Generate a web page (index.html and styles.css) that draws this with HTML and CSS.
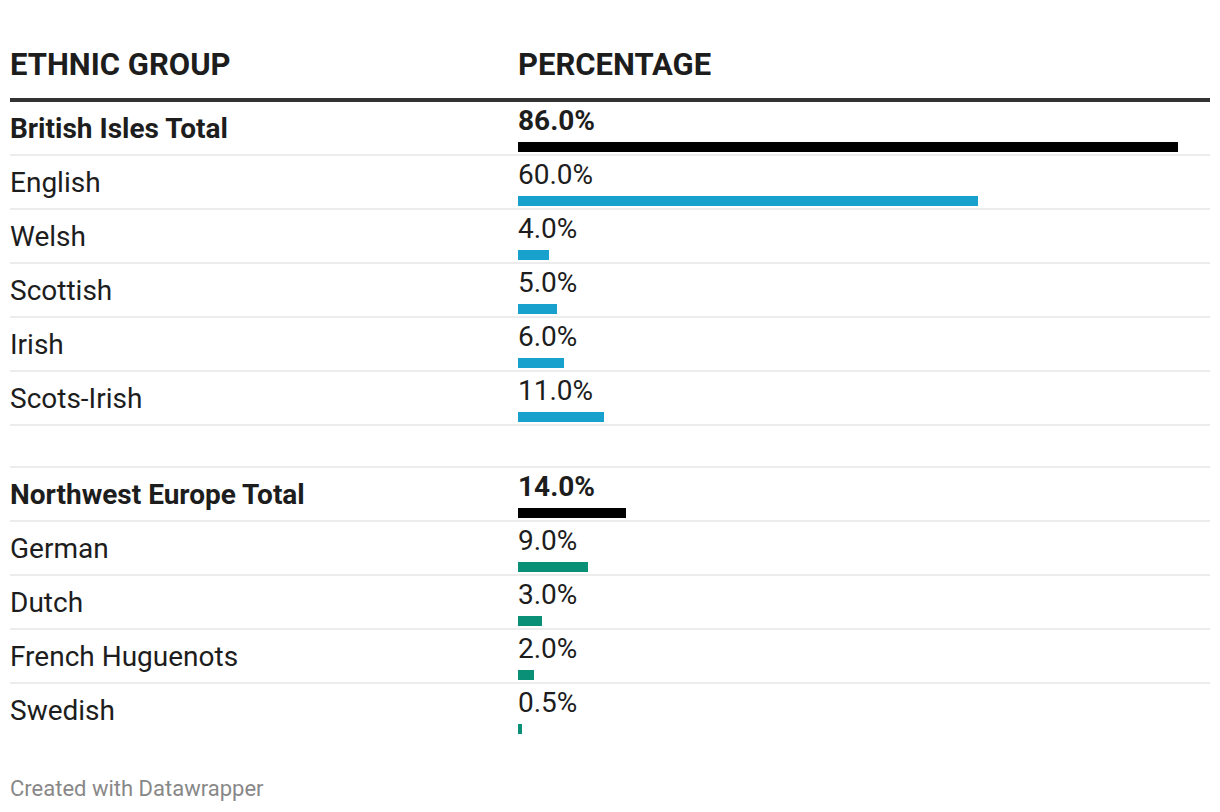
FILE: index.html
```html
<!DOCTYPE html>
<html lang="en">
<head>
<meta charset="utf-8">
<title>Ethnic groups</title>
<link rel="stylesheet" href="styles.css">
</head>
<body>
<div class="chart">
  <div class="table">
    <div class="row head">
      <div class="cell">ETHNIC GROUP</div>
      <div class="cell">PERCENTAGE</div>
    </div>

    <div class="row total">
      <div class="label">British Isles Total</div>
      <div class="val"><span class="num">86.0%</span><span class="bar black" style="width:660px"></span></div>
    </div>
    <div class="row">
      <div class="label">English</div>
      <div class="val"><span class="num">60.0%</span><span class="bar blue" style="width:460px"></span></div>
    </div>
    <div class="row">
      <div class="label">Welsh</div>
      <div class="val"><span class="num">4.0%</span><span class="bar blue" style="width:31px"></span></div>
    </div>
    <div class="row">
      <div class="label">Scottish</div>
      <div class="val"><span class="num">5.0%</span><span class="bar blue" style="width:39px"></span></div>
    </div>
    <div class="row">
      <div class="label">Irish</div>
      <div class="val"><span class="num">6.0%</span><span class="bar blue" style="width:46px"></span></div>
    </div>
    <div class="row">
      <div class="label">Scots-Irish</div>
      <div class="val"><span class="num">11.0%</span><span class="bar blue" style="width:86px"></span></div>
    </div>
    <div class="row blank"></div>

    <div class="row total">
      <div class="label">Northwest Europe Total</div>
      <div class="val"><span class="num">14.0%</span><span class="bar black" style="width:108px"></span></div>
    </div>
    <div class="row">
      <div class="label">German</div>
      <div class="val"><span class="num">9.0%</span><span class="bar green" style="width:70px"></span></div>
    </div>
    <div class="row">
      <div class="label">Dutch</div>
      <div class="val"><span class="num">3.0%</span><span class="bar green" style="width:24px"></span></div>
    </div>
    <div class="row">
      <div class="label">French Huguenots</div>
      <div class="val"><span class="num">2.0%</span><span class="bar green" style="width:16px"></span></div>
    </div>
    <div class="row last">
      <div class="label">Swedish</div>
      <div class="val"><span class="num">0.5%</span><span class="bar green" style="width:4px"></span></div>
    </div>
  </div>
  <div class="footer">Created with Datawrapper</div>
</div>
</body>
</html>
```

FILE: styles.css
```css
html, body {
  margin: 0;
  padding: 0;
  background: #ffffff;
}

body {
  font-family: Roboto, "Liberation Sans", sans-serif;
  color: #1d1d1d;
}

.chart {
  padding: 0 10px;
}

.table {
  display: flex;
  flex-direction: column;
}

.row {
  display: grid;
  grid-template-columns: 508px 1fr;
  height: 52px;
  border-bottom: 2px solid #ececec;
}

.row.head {
  height: 102px;
  box-sizing: border-box;
  border-bottom: 4px solid #333333;
  align-items: end;
  padding-bottom: 18px;
  font-weight: 700;
  font-size: 31px;
  line-height: 31px;
}

.row.blank {
  height: 40px;
}

.row.last {
  border-bottom: none;
}

.label {
  display: flex;
  align-items: center;
  padding-top: 2px;
  font-size: 28px;
  line-height: 28px;
}

.total .label,
.total .num {
  font-weight: 700;
}

.val {
  display: flex;
  flex-direction: column;
  padding-top: 5px;
}

.num {
  font-size: 28px;
  line-height: 28px;
  margin-bottom: 7px;
}

.bar {
  display: block;
  height: 10px;
}

.bar.black { background: #000000; }
.bar.blue { background: #18a1cd; }
.bar.green { background: #0a9076; }

.footer {
  margin-top: 40px;
  font-size: 22px;
  line-height: 26px;
  color: #888888;
}
```
